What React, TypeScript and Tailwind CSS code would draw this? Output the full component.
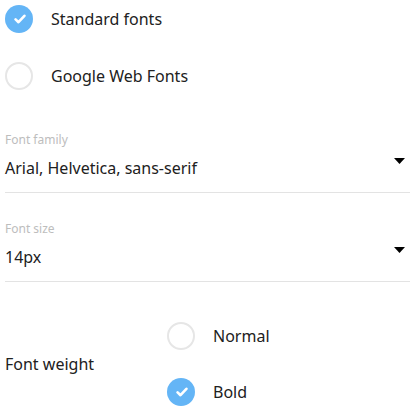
import { useState } from 'react'

const font = { fontFamily: '"Noto Sans", "Open Sans", sans-serif' }

function Radio({ checked, label, onClick }: { checked: boolean; label: string; onClick?: () => void }) {
  return (
    <button type="button" onClick={onClick} className="flex items-center gap-[18px] text-left">
      {checked ? (
        <span className="flex h-7 w-7 items-center justify-center rounded-full bg-[#64b5f6]">
          <svg viewBox="0 0 12 10" className="ml-px h-[10px] w-[12px]" fill="none" stroke="white" strokeWidth="2.6" strokeLinecap="round" strokeLinejoin="round">
            <path d="M1.6 5.4 4.5 8.2 10.4 1.8" />
          </svg>
        </span>
      ) : (
        <span className="h-7 w-7 rounded-full border-2 border-[#e6e6e6]" />
      )}
      <span className="text-base text-[#212121]">{label}</span>
    </button>
  )
}

function Select({ label, value }: { label: string; value: string }) {
  return (
    <div className="border-b border-[#e3e3e3] pb-3">
      <div className="h-4 text-xs leading-4 text-[#bdbdbd]">{label}</div>
      <div className="mt-2 flex items-start justify-between">
        <span className="h-6 text-base leading-6 text-[#212121]">{value}</span>
        <svg viewBox="0 0 11 6" className="mr-[5px] mt-[2px] h-[6px] w-[11px]">
          <path d="M0 0h11L5.5 6z" fill="#000" />
        </svg>
      </div>
    </div>
  )
}

export default function App() {
  const [source, setSource] = useState<'standard' | 'google'>('standard')
  const [weight, setWeight] = useState<'normal' | 'bold'>('bold')

  return (
    <div className="w-[416px] bg-white pl-[5px] pr-[6px] pt-[5px]" style={font}>
      <div className="flex flex-col gap-[29px]">
        <Radio checked={source === 'standard'} label="Standard fonts" onClick={() => setSource('standard')} />
        <Radio checked={source === 'google'} label="Google Web Fonts" onClick={() => setSource('google')} />
      </div>

      <div className="mt-[42px]">
        <Select label="Font family" value="Arial, Helvetica, sans-serif" />
      </div>
      <div className="mt-[28px]">
        <Select label="Font size" value="14px" />
      </div>

      <div className="mt-[40px] flex items-center">
        <span className="w-[162px] text-base text-[#212121]">Font weight</span>
        <div className="flex flex-col gap-[28px]">
          <Radio checked={weight === 'normal'} label="Normal" onClick={() => setWeight('normal')} />
          <Radio checked={weight === 'bold'} label="Bold" onClick={() => setWeight('bold')} />
        </div>
      </div>
    </div>
  )
}
